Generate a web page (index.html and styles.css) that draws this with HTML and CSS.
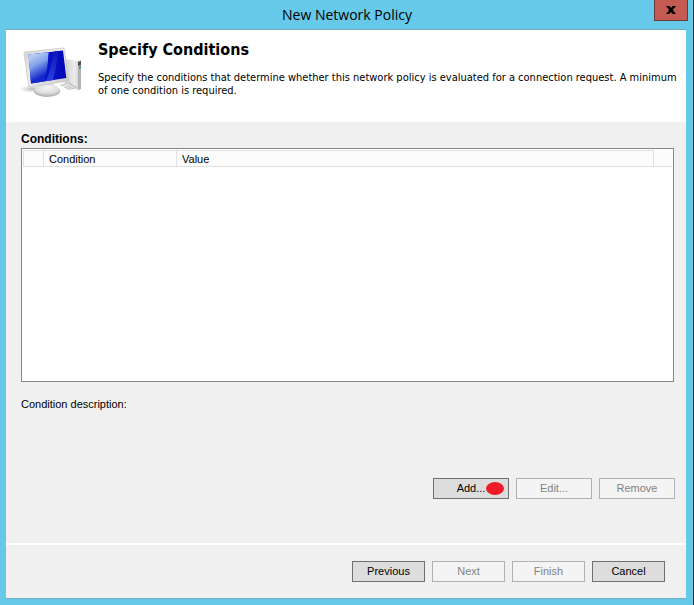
FILE: index.html
```html
<!DOCTYPE html>
<html lang="en">
<head>
<meta charset="utf-8">
<meta name="viewport" content="width=device-width, initial-scale=1">
<title>New Network Policy</title>
<link rel="stylesheet" href="styles.css">
</head>
<body>
<div class="window">
  <header class="titlebar">
    <h1 class="titlebar-text">New Network Policy</h1>
    <button class="close" type="button" aria-label="Close">
      <svg width="10" height="8" viewBox="0 0 10 8" aria-hidden="true"><path d="M0 0h3.400L5 2 6.600 0H10L6.800 4 10 8H6.600L5 6 3.400 8H0l3.200-4z" fill="#000"/></svg>
    </button>
  </header>
  <main class="dialog">
    <section class="intro">
      <svg class="intro-icon" width="64" height="56" viewBox="0 0 64 56" aria-hidden="true">
        <defs>
          <linearGradient id="screen" x1="0" y1="0" x2="1" y2="0">
            <stop offset="0" stop-color="#1428cc"/><stop offset=".5" stop-color="#0a14cc"/><stop offset="1" stop-color="#0008b4"/>
          </linearGradient>
          <linearGradient id="glare" x1="0" y1="0" x2=".35" y2="1">
            <stop offset="0" stop-color="#cfe2fa"/><stop offset=".45" stop-color="#86a6ea"/><stop offset=".9" stop-color="#1428cc"/>
          </linearGradient>
          <linearGradient id="streak" x1="0" y1="0" x2="0" y2="1">
            <stop offset="0" stop-color="#0c18b8"/><stop offset="1" stop-color="#2a40dc"/>
          </linearGradient>
          <linearGradient id="frame" x1="0" y1="0" x2="1" y2="1">
            <stop offset="0" stop-color="#d4d4d4"/><stop offset=".5" stop-color="#eee"/><stop offset="1" stop-color="#c4c4c4"/>
          </linearGradient>
          <linearGradient id="tower" x1="0" y1="0" x2="1" y2="0">
            <stop offset="0" stop-color="#d0d0d0"/><stop offset=".6" stop-color="#ececec"/><stop offset="1" stop-color="#c4c4c4"/>
          </linearGradient>
          <radialGradient id="base" cx=".5" cy=".3" r=".7">
            <stop offset="0" stop-color="#f4f4f4"/><stop offset=".65" stop-color="#dedede"/><stop offset="1" stop-color="#b8b8b8"/>
          </radialGradient>
          <radialGradient id="shade">
            <stop offset="0" stop-color="#777" stop-opacity=".55"/><stop offset="1" stop-color="#999" stop-opacity="0"/>
          </radialGradient>
        </defs>
        <ellipse cx="13" cy="43" rx="14" ry="4" fill="url(#shade)"/>
        <path d="M45 13l13 2 3-1v29l-3 1-13-5z" fill="url(#tower)"/>
        <path d="M58 16l3-1v28l-3 1z" fill="#b2b4b4"/>
        <path d="M58 16l3-1v4l-3 1z" fill="#4a504c"/>
        <path d="M59 21l2-1v2l-2 1z" fill="#27a057"/>
        <path d="M40 39l9-3 9 6-9 2z" fill="#c6c6c6"/>
        <path d="M43 39l8 4M46 38l8 4M41 41l8-3" stroke="#eee" fill="none"/>
        <path d="M19 38h14l3 6H18z" fill="#c6c6c6"/>
        <ellipse cx="27" cy="45" rx="13" ry="6" fill="#b4b4b4"/>
        <ellipse cx="27" cy="44" rx="12.500" ry="6" fill="url(#base)"/>
        <path d="M5 6L43 2q1 0 1.300 1L48.500 34q0 1-1 1.200L10 40.800q-1.200 0-1.500-1.500L4 7.500Q4 6 5 6z" fill="url(#frame)" stroke="#c4c4c4" stroke-width=".7"/>
        <path d="M8.500 8.500L43 4.500l3.300 27.500L11 37.500z" fill="url(#screen)"/>
        <path d="M8.500 8.500l20-2.300Q28 22 24 35.500l-13 2z" fill="url(#glare)"/>
        <path d="M34 5.500L38 5Q37 20 33 34l-7 1.100Q32 20 34 5.500z" fill="url(#streak)"/>
      </svg>
      <div class="intro-copy">
        <h2 class="intro-title">Specify Conditions</h2>
        <p class="intro-text">Specify the conditions that determine whether this network policy is evaluated for a connection request. A minimum of one condition is required.</p>
      </div>
    </section>
    <section class="content">
      <h3 class="label" id="conditions">Conditions:</h3>
      <div class="list">
        <table class="grid" aria-labelledby="conditions">
          <thead>
            <tr><th class="col-icon"></th><th class="col-condition">Condition</th><th>Value</th><th class="col-end"></th></tr>
          </thead>
          <tbody></tbody>
        </table>
      </div>
      <p class="description">Condition description:</p>
      <div class="actions">
        <button class="btn" type="button">Add...<span class="marker"></span></button>
        <button class="btn" type="button" disabled>Edit...</button>
        <button class="btn" type="button" disabled>Remove</button>
      </div>
    </section>
    <footer class="footer">
      <button class="btn" type="button">Previous</button>
      <button class="btn" type="button" disabled>Next</button>
      <button class="btn" type="button" disabled>Finish</button>
      <button class="btn" type="button">Cancel</button>
    </footer>
  </main>
</div>
</body>
</html>
```
FILE: styles.css
```css
* { box-sizing: border-box; }

body {
  margin: 0;
  font: 11px/14px "Liberation Sans", Arial, sans-serif;
  color: #000;
}

h1, h2, h3, p { margin: 0; }

.window {
  display: flex;
  flex-direction: column;
  min-height: 100vh;
  padding: 0 7px 6px 6px;
  background: #66c9e9;
  border-right: 1px solid #1c3a48;
}

.titlebar {
  display: grid;
  grid-template-columns: 34px 1fr 34px;
  height: 29px;
  margin-right: -2px;
}

.titlebar-text {
  grid-column: 2;
  font: 14px/29px "Open Sans", "Noto Sans", sans-serif;
  text-align: center;
}

.close {
  display: flex;
  align-items: center;
  justify-content: center;
  height: 21px;
  padding: 0;
  background: #c35b52;
  border: 1px solid #6b3a38;
  border-top: 0;
}

.dialog {
  display: flex;
  flex: 1;
  flex-direction: column;
  background: #f0f0f0;
  border-top: 1px solid #74adc0;
  border-bottom: 1px solid #74adc0;
}

.intro {
  display: flex;
  gap: 14px;
  height: 92px;
  padding: 10px 0 0 14px;
  background: #fff;
}

.intro-icon {
  flex: none;
  margin-top: 6px;
}

.intro-title {
  font: bold 16px/20px "DejaVu Sans Condensed", Tahoma, sans-serif;
}

.intro-text {
  margin-top: 11px;
  font: 11px/13px "DejaVu Sans Condensed", Tahoma, sans-serif;
}

.content {
  display: flex;
  flex: 1;
  flex-direction: column;
  padding: 10px 12px 44px 15px;
}

.label {
  font: bold 12px/14px "Liberation Sans", Arial, sans-serif;
}

.list {
  flex: 1;
  margin-top: 2px;
  padding: 1px;
  background: #fff;
  border: 1px solid #828790;
}

.grid {
  width: 100%;
  table-layout: fixed;
  border-collapse: collapse;
}

.grid th {
  height: 16px;
  padding: 0 5px;
  font-weight: normal;
  text-align: left;
  background: #fcfcfc;
  border: 1px solid #e0e0e0;
}

.grid .col-icon { width: 20px; padding: 0; }
.grid .col-condition { width: 133px; }
.grid .col-end { width: 19px; padding: 0; border-top: 0; border-right: 0; }

.description {
  height: 81px;
  margin-top: 15px;
}

.actions {
  display: flex;
  justify-content: flex-end;
  gap: 7px;
  margin-right: -1px;
}

.btn {
  position: relative;
  width: 73px;
  height: 21px;
  padding: 0;
  font: 11px/19px "Liberation Sans", Arial, sans-serif;
  color: #000;
  background: #ddd;
  border: 1px solid #707070;
}

.actions .btn { width: 76px; }

.btn:disabled {
  color: #838383;
  background: #f4f4f4;
  border-color: #adb2b5;
}

.marker {
  position: absolute;
  top: 3px;
  right: 4px;
  width: 18px;
  height: 13px;
  background: #ed1c24;
  border-radius: 50%;
}

.footer {
  display: flex;
  justify-content: flex-end;
  gap: 7px;
  padding: 16px 21px;
  border-top: 2px solid #fff;
}
```
